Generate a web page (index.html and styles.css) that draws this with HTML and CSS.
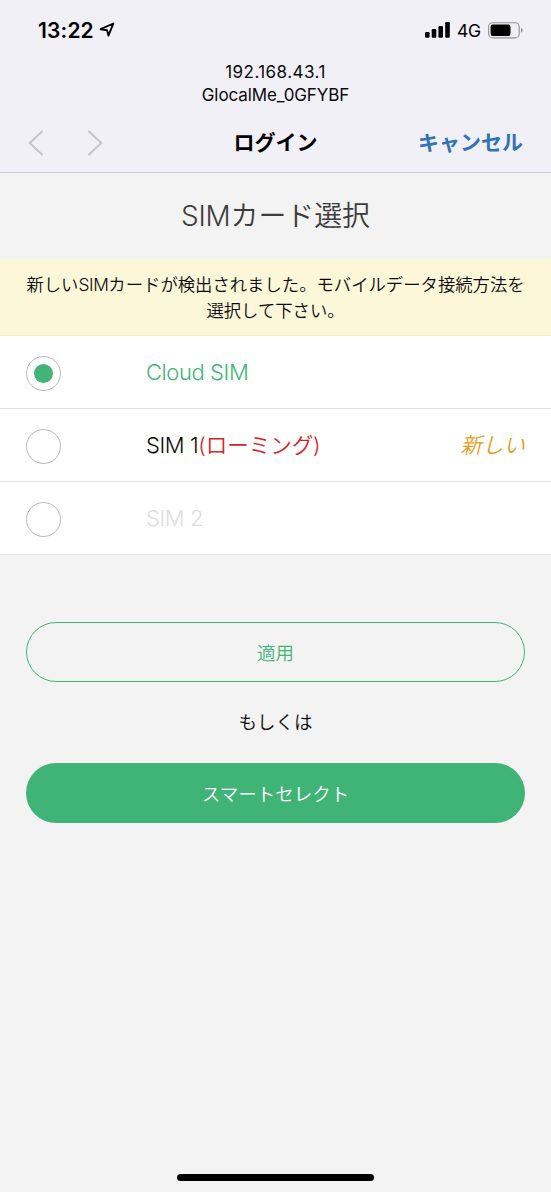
FILE: index.html
```html
<!DOCTYPE html>
<html lang="ja">
<head>
<meta charset="utf-8">
<title>SIMカード選択</title>
<link rel="stylesheet" href="styles.css">
</head>
<body>
<div class="screen">
  <header class="header">
    <div class="status">
      <span class="time">13:22</span>
      <svg class="location" width="16" height="16" viewBox="0 0 16 16"><path d="M1.6 7.2 14.4 1.5 9.4 13.6 8.1 8.2Z" fill="none" stroke="#000" stroke-width="1.9" stroke-linejoin="round"/></svg>
      <span class="status-right">
        <svg class="signal" width="26" height="16" viewBox="0 0 26 16"><rect x="0" y="10" width="4.6" height="5.7" rx="1.2"/><rect x="6.7" y="7" width="4.6" height="8.7" rx="1.2"/><rect x="13.4" y="4" width="4.6" height="11.7" rx="1.2"/><rect x="20.2" y="0" width="4.6" height="15.7" rx="1.2"/></svg>
        <span class="network">4G</span>
        <svg class="battery" width="35" height="17" viewBox="0 0 35 17"><rect x=".6" y=".7" width="30.6" height="15.2" rx="4" fill="none" stroke="#929296" stroke-width="1.1"/><rect x="2.6" y="2.6" width="19.9" height="11.3" rx="2.2"/><path d="M33 5.8c2.2.8 2.2 4.2 0 5Z" fill="#929296"/></svg>
      </span>
    </div>
    <div class="network-name"><div class="address">192.168.43.1</div><div class="ssid">GlocalMe_0GFYBF</div></div>
    <nav class="nav">
      <div class="arrows">
        <svg width="16" height="26" viewBox="0 0 16 26"><path d="M14 1.5 1.7 13 14 24.5"/></svg>
        <svg width="16" height="26" viewBox="0 0 16 26"><path d="M2 1.5 14.3 13 2 24.5"/></svg>
      </div>
      <div class="nav-title">ログイン</div>
      <div class="cancel">キャンセル</div>
    </nav>
  </header>
  <main>
    <h1 class="title"><span class="title-latin">SIM</span>カード選択</h1>
    <div class="notice"><div class="notice-first">新しい<span class="latin">SIM</span>カードが検出されました。モバイルデータ接続方法を</div><div>選択して下さい。</div></div>
    <div class="options">
      <label class="option selected"><span class="radio"><span class="dot"></span></span><span class="name">Cloud SIM</span></label>
      <label class="option"><span class="radio"></span><span class="name">SIM 1</span><span class="roaming">(ローミング)</span><span class="new">新しい</span></label>
      <label class="option disabled"><span class="radio"></span><span class="name">SIM 2</span></label>
    </div>
    <div class="actions">
      <button class="button outline">適用</button>
      <p class="or">もしくは</p>
      <button class="button filled">スマートセレクト</button>
    </div>
  </main>
  <div class="home"></div>
</div>
</body>
</html>
```

FILE: styles.css
```css
* { box-sizing: border-box; }
body { margin: 0; }
.screen {
  display: flex;
  flex-direction: column;
  width: 551px;
  height: 1192px;
  overflow: hidden;
  background: #f3f3f3;
  color: #0a0a0a;
  font-family: Inter, "Noto Sans CJK JP", sans-serif;
}
.header { height: 173px; background: #f1f0f7; border-bottom: 1px solid #cfcfd3; }
.status { display: flex; align-items: center; height: 60px; padding: 0 28px 0 38px; color: #000; }
.time { width: 57px; font-size: 21px; font-weight: 600; letter-spacing: .15px; white-space: nowrap; }
.location { margin-left: 4px; }
.status-right { display: flex; align-items: center; margin-left: auto; }
.network { width: 23px; margin: 0 8px 0 6px; font-size: 17.5px; font-weight: 400; letter-spacing: -.2px; }
.network-name { height: 46px; padding-top: 1px; font-size: 17px; line-height: 23px; text-align: center; }
.address { letter-spacing: .45px; }
.ssid { letter-spacing: -.1px; }
.nav { display: grid; grid-template-columns: 1fr 84px 1fr; align-items: center; height: 66px; padding: 7px 28px 0; }
.arrows { display: flex; gap: 43px; }
.arrows path { fill: none; stroke: #c4c4c9; stroke-width: 2; stroke-linecap: round; }
.nav-title { color: #000; font-size: 21px; line-height: 28px; font-weight: 700; text-align: center; }
.cancel { color: #3272b8; font-size: 21px; line-height: 28px; font-weight: 600; text-align: right; white-space: nowrap; }
.title { height: 86px; margin: 0; color: #3c3c3c; font-size: 27.9px; font-weight: 350; line-height: 87px; text-align: center; }
.title-latin { font-weight: 300; letter-spacing: -.2px; }
.notice { height: 77px; padding-top: 13px; background: #fdf7da; border-bottom: 1px solid #f1ead0; font-size: 17.35px; font-weight: 350; line-height: 25.5px; text-align: center; }
.notice-first { white-space: nowrap; }
.latin { letter-spacing: -.4px; }
.options { background: #fff; }
.option { display: flex; align-items: center; height: 73px; padding: 0 26px; border-bottom: 1px solid #e3e3e3; font-size: 22px; font-weight: 300; line-height: 32px; white-space: nowrap; }
.name { letter-spacing: -.42px; }
.radio { display: flex; align-items: center; justify-content: center; width: 35px; height: 35px; margin: 2px 85px 0 0; border: 1.5px solid #b8b8b8; border-radius: 50%; }
.dot { width: 19px; height: 19px; border-radius: 50%; background: #42b477; }
.selected .name { color: #42b477; }
.disabled .name { color: #dedede; }
.roaming { color: #d8232a; font-size: 21.6px; font-weight: 350; letter-spacing: -.1px; }
.new { margin-left: auto; color: #e69b20; font-size: 21.5px; font-weight: 350; font-style: italic; }
.actions { padding: 67px 26px 0; }
.button { display: block; width: 499px; height: 60px; padding: 0 0 1px; border: 0; border-radius: 30px; font: inherit; font-size: 18.5px; font-weight: 350; }
.outline { border: 1.5px solid #42b477; background: transparent; color: #42b477; }
.filled { background: #40b476; color: #fff; }
.or { height: 81px; margin: 0; font-size: 18.5px; font-weight: 350; line-height: 80px; text-align: center; }
.home { width: 197px; height: 7px; margin: auto auto 11px; border-radius: 4px; background: #000; }
```
